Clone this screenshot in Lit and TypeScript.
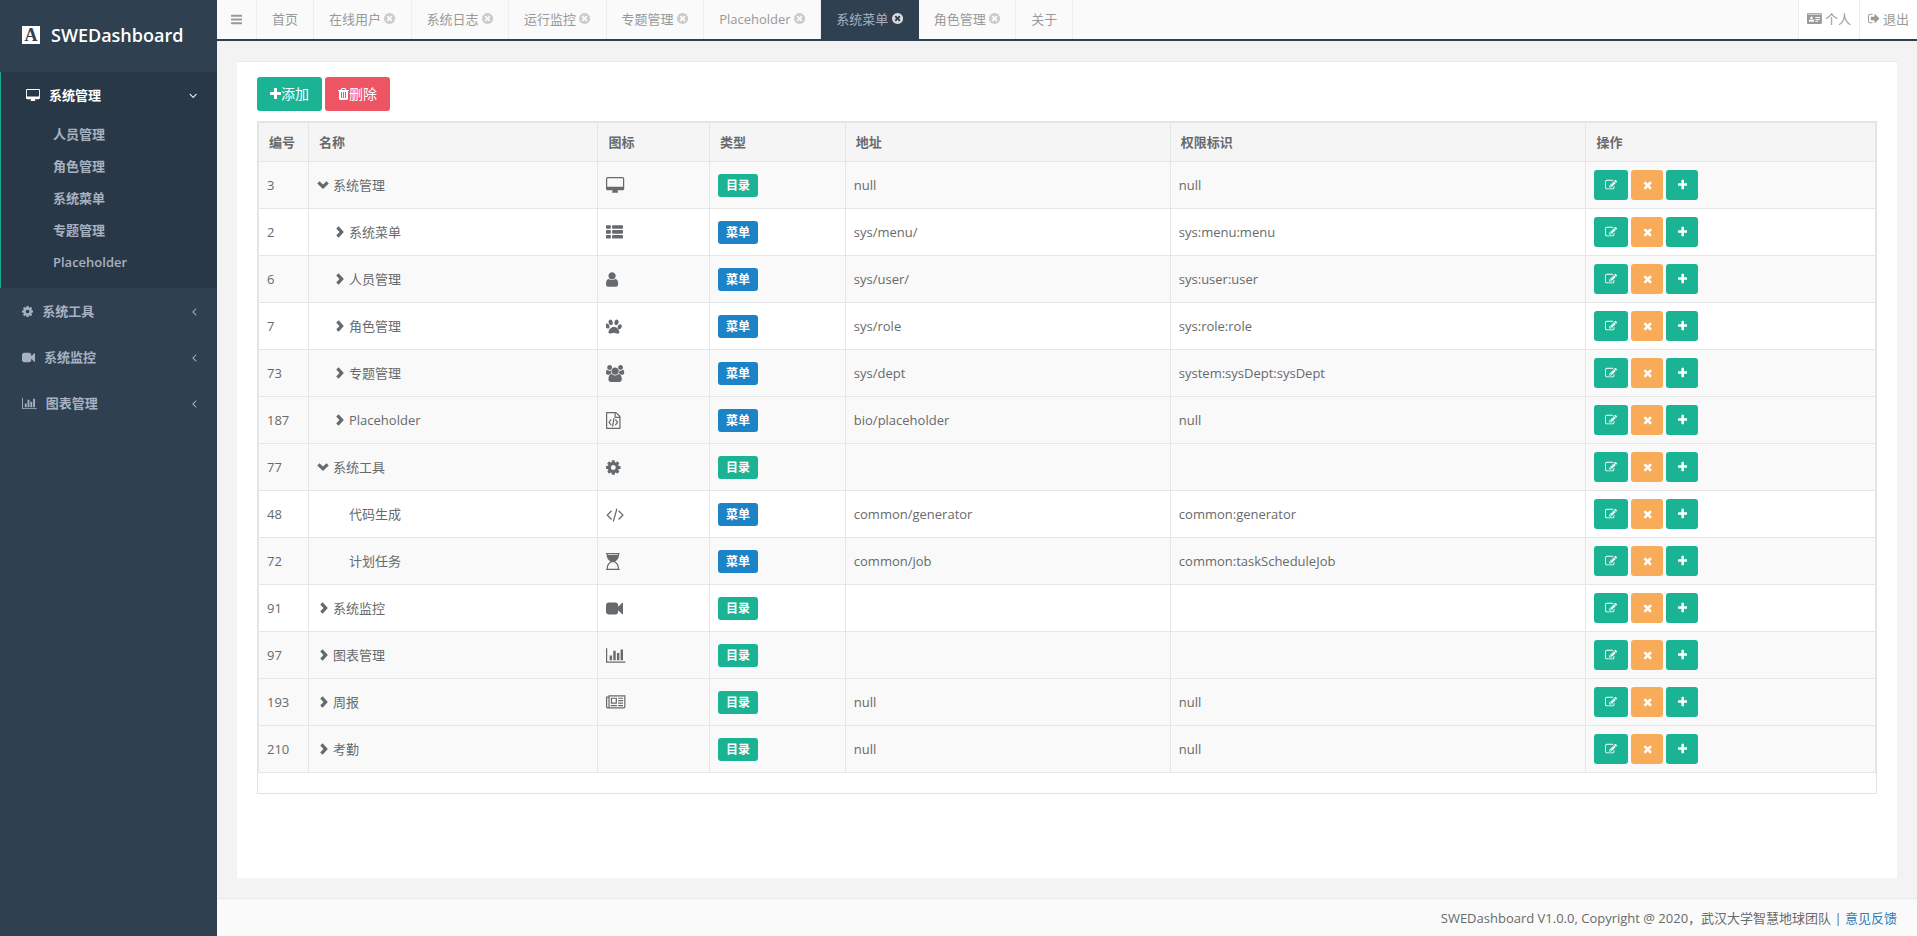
import { LitElement, html, svg, css, nothing } from "lit";
import { customElement, property } from "lit/decorators.js";

/* Icons on a 1792-unit em: [viewBox x, viewBox width, path] */
const ICONS: Record<string, [number, number, string]> = {
  bars: [128, 1536, "M1664 1344v128q0 26-19 45t-45 19h-1408q-26 0-45-19t-19-45v-128q0-26 19-45t45-19h1408q26 0 45 19t19 45zm0-512v128q0 26-19 45t-45 19h-1408q-26 0-45-19t-19-45v-128q0-26 19-45t45-19h1408q26 0 45 19t19 45zm0-512v128q0 26-19 45t-45 19h-1408q-26 0-45-19t-19-45v-128q0-26 19-45t45-19h1408q26 0 45 19t19 45z"],
  close: [128, 1536, "M1277 1122q0-26-19-45l-181-181 181-181q19-19 19-45 0-27-19-46l-90-90q-19-19-46-19-26 0-45 19l-181 181-181-181q-19-19-45-19-27 0-46 19l-90 90q-19 19-19 46 0 26 19 45l181 181-181 181q-19 19-19 45 0 27 19 46l90 90q19 19 46 19 26 0 45-19l181-181 181 181q19 19 45 19 27 0 46-19l90-90q19-19 19-46zm387-226q0 209-103 385.5t-279.5 279.5-385.5 103-385.5-103-279.5-279.5-103-385.5 103-385.5 279.5-279.5 385.5-103 385.5 103 279.5 279.5 103 385.5z"],
  plus: [192, 1408, "M1600 736v192q0 40-28 68t-68 28h-416v416q0 40-28 68t-68 28h-192q-40 0-68-28t-28-68v-416h-416q-40 0-68-28t-28-68v-192q0-40 28-68t68-28h416v-416q0-40 28-68t68-28h192q40 0 68 28t28 68v416h416q40 0 68 28t28 68z"],
  times: [192, 1408, "M1490 1322q0 40-28 68l-136 136q-28 28-68 28t-68-28l-294-294-294 294q-28 28-68 28t-68-28l-136-136q-28-28-28-68t28-68l294-294-294-294q-28-28-28-68t28-68l136-136q28-28 68-28t68 28l294 294 294-294q28-28 68-28t68 28l136 136q28 28 28 68t-28 68l-294 294 294 294q28 28 28 68z"],
  edit: [0, 1792, "M888 1184l116-116-152-152-116 116v56h96v96h56zm440-720q-16-16-33 1l-350 350q-17 17-1 33t33-1l350-350q17-17 1-33zm80 594v190q0 119-84.5 203.5t-203.5 84.5h-832q-119 0-203.5-84.5t-84.5-203.5v-832q0-119 84.5-203.5t203.5-84.5h832q63 0 117 25 15 7 18 23 3 17-9 29l-49 49q-14 14-32 8-23-6-45-6h-832q-66 0-113 47t-47 113v832q0 66 47 113t113 47h832q66 0 113-47t47-113v-126q0-13 9-22l64-64q15-15 35-7t20 29zm-96-738l288 288-672 672h-288v-288zm444 132l-92 92-288-288 92-92q28-28 68-28t68 28l152 152q28 28 28 68t-28 68z"],
  cog: [128, 1536, "M1152 896q0-106-75-181t-181-75-181 75-75 181 75 181 181 75 181-75 75-181zm512-109v222q0 12-8 23t-20 13l-185 28q-19 54-39 91 35 50 107 138 10 12 10 25t-9 23q-27 37-99 108t-94 71q-12 0-26-9l-138-108q-44 23-91 38-16 136-29 186-7 28-36 28h-222q-14 0-24.5-8.5t-11.5-21.5l-28-184q-49-16-90-37l-141 107q-10 9-25 9-14 0-25-11-126-114-165-168-7-10-7-23 0-12 8-23 15-21 51-66.5t54-70.5q-27-50-41-99l-183-27q-13-2-21-12.5t-8-23.5v-222q0-12 8-23t19-13l186-28q14-46 39-92-40-57-107-138-10-12-10-24 0-10 9-23 26-36 98.5-107.5t94.5-71.5q13 0 26 10l138 107q44-23 91-38 16-136 29-186 7-28 36-28h222q14 0 24.5 8.5t11.5 21.5l28 184q49 16 90 37l142-107q9-9 24-9 13 0 25 10 129 119 165 170 7 8 7 22 0 12-8 23-15 21-51 66.5t-54 70.5q26 50 41 98l183 28q13 2 21 12.5t8 23.5z"],
  video: [0, 1792, "M1792 352v1088q0 42-39 59-13 5-25 5-27 0-45-19l-403-403v166q0 119-84.5 203.5t-203.5 84.5h-704q-119 0-203.5-84.5t-84.5-203.5v-704q0-119 84.5-203.5t203.5-84.5h704q119 0 203.5 84.5t84.5 203.5v165l403-402q18-19 45-19 12 0 25 5 39 17 39 59z"],
  list: [0, 1792, "M512 1248v192q0 40-28 68t-68 28h-320q-40 0-68-28t-28-68v-192q0-40 28-68t68-28h320q40 0 68 28t28 68zM512 736v192q0 40-28 68t-68 28h-320q-40 0-68-28t-28-68v-192q0-40 28-68t68-28h320q40 0 68 28t28 68zM512 224v192q0 40-28 68t-68 28h-320q-40 0-68-28t-28-68v-192q0-40 28-68t68-28h320q40 0 68 28t28 68zM1792 1248v192q0 40-28 68t-68 28h-960q-40 0-68-28t-28-68v-192q0-40 28-68t68-28h960q40 0 68 28t28 68zM1792 736v192q0 40-28 68t-68 28h-960q-40 0-68-28t-28-68v-192q0-40 28-68t68-28h960q40 0 68 28t28 68zM1792 224v192q0 40-28 68t-68 28h-960q-40 0-68-28t-28-68v-192q0-40 28-68t68-28h960q40 0 68 28t28 68z"],
  user: [256, 1280, "M1536 1399q0 109-62.5 187t-150.5 78h-854q-88 0-150.5-78t-62.5-187q0-85 8.5-160.5t31.5-152 58.5-131 94-89 134.5-34.5q131 128 313 128t313-128q76 0 134.5 34.5t94 89 58.5 131 31.5 152 8.5 160.5zm-256-887q0 159-112.5 271.5t-271.5 112.5-271.5-112.5-112.5-271.5 112.5-271.5 271.5-112.5 271.5 112.5 112.5 271.5z"],
  chart: [0, 2048, "M640 896v512h-256v-512h256zm384-512v1024h-256v-1024h256zm1024 1152v128h-2048v-1536h128v1408h1920zm-640-896v768h-256v-768h256zm384-384v1152h-256v-1152h256z"],
  desktop: [0, 1920, "M1792 992v-832q0-13-9.5-22.5t-22.5-9.5h-1600q-13 0-22.5 9.5t-9.5 22.5v832q0 13 9.5 22.5t22.5 9.5h1600q13 0 22.5-9.5t9.5-22.5zm128-832v1088q0 66-47 113t-113 47h-544q0 37 16 77.5t32 71 16 43.5q0 26-19 45t-45 19h-512q-26 0-45-19t-19-45q0-14 16-44t32-70 16-78h-544q-66 0-113-47t-47-113v-1088q0-66 47-113t113-47h1600q66 0 113 47t47 113z"],
  users: [-64, 1920, "M529 896q-162 5-265 128h-134q-82 0-138-40.5t-56-118.5q0-353 124-353 6 0 43.5 21t97.5 42.5 119 21.5q67 0 133-23-5 37-5 66 0 139 81 256zm1071 637q0 120-73 189.5t-194 69.5h-874q-121 0-194-69.5t-73-189.5q0-53 3.5-103.5t14-109 26.5-108.5 43-97.5 62-81 85.5-53.5 111.5-20q10 0 43 21.5t73 48 107 48 135 21.5 135-21.5 107-48 73-48 43-21.5q61 0 111.5 20t85.5 53.5 62 81 43 97.5 26.5 108.5 14 109 3.5 103.5zm-1024-1277q0 106-75 181t-181 75-181-75-75-181 75-181 181-75 181 75 75 181zm704 384q0 159-112.5 271.5t-271.5 112.5-271.5-112.5-112.5-271.5 112.5-271.5 271.5-112.5 271.5 112.5 112.5 271.5zm576 225q0 78-56 118.5t-138 40.5h-134q-103-123-265-128 81-117 81-256 0-29-5-66 66 23 133 23 59 0 119-21.5t97.5-42.5 43.5-21q124 0 124 353zm-128-609q0 106-75 181t-181 75-181-75-75-181 75-181 181-75 181 75 75 181z"],
  paw: [64, 1664, "M780 508q0 60-19 113.5t-63 92.5-105 39q-76 0-138-57.5t-92-135.5-30-151q0-60 19-113.5t63-92.5 105-39q77 0 138.5 57.5t91.5 135 30 151.5zm-342 411q0 80-42 139t-119 59q-76 0-141.5-55.5t-100.5-133.5-35-152q0-80 42-139.5t119-59.5q76 0 141.5 55.5t100.5 134 35 152.5zm458-7q118 0 255 97.5t229 237 92 254.5q0 46-17 76.5t-48.5 45-64.5 20-76 5.5q-68 0-187.5-45t-182.5-45q-66 0-192.5 44.5t-200.5 44.5q-183 0-183-146 0-86 56-191.5t139.5-192.5 187.5-146 193-59zm239-159q-61 0-105-39t-63-92.5-19-113.5q0-74 30-151.5t91.5-135 138.5-57.5q61 0 105 39t63 92.5 19 113.5q0 73-30 151t-92 135.5-138 57.5zm432-104q77 0 119 59.5t42 139.5q0 74-35 152t-100.5 133.5-141.5 55.5q-77 0-119-59t-42-139q0-74 35-152.5t100.5-134 141.5-55.5z"],
  filecode: [128, 1536, "M1596 380q28 28 48 76t20 88v1152q0 40-28 68t-68 28h-1344q-40 0-68-28t-28-68v-1600q0-40 28-68t68-28h896q40 0 88 20t76 48zm-444-244v376h376q-10-29-22-41l-313-313q-12-12-41-22zm384 1528v-1024h-416q-40 0-68-28t-28-68v-416h-768v1536h1280zM608 768q8-11 21-12.5t24 6.5l51 38q11 8 12.5 21t-6.5 24l-182 243 182 243q8 11 6.5 24t-12.5 21l-51 38q-11 8-24 6.5t-21-12.5l-226-301q-14-19 0-38zM1410 1069q14 19 0 38l-226 301q-8 11-21 12.5t-24-6.5l-51-38q-11-8-12.5-21t6.5-24l182-243-182-243q-8-11-6.5-24t12.5-21l51-38q11-8 24-6.5t21 12.5zM792 1534q-13-2-20.5-13t-5.5-24l138-831q2-13 13-20.5t24-5.5l63 10q13 2 20.5 13t5.5 24l-138 831q-2 13-13 20.5t-24 5.5z"],
  code: [64, 1920, "M681 1399l-50 50q-10 10-23 10t-23-10l-466-466q-10-10-10-23t10-23l466-466q10-10 23-10t23 10l50 50q10 10 10 23t-10 23l-393 393 393 393q10 10 10 23t-10 23zm591-1067l-373 1291q-4 13-15.5 19.5t-23.5 2.5l-62-17q-13-4-19.5-15.5t-2.5-24.5l373-1291q4-13 15.5-19.5t23.5-2.5l62 17q13 4 19.5 15.5t2.5 24.5zm657 651l-466 466q-10 10-23 10t-23-10l-50-50q-10-10-10-23t10-23l393-393-393-393q-10-10-10-23t10-23l50-50q10-10 23-10t23 10l466 466q10 10 10 23t-10 23z"],
  hourglass: [128, 1536, "M160 0h1376q32 0 32 32v64q0 32-32 32h-1376q-32 0-32-32v-64q0-32 32-32zM192 128h128v90h1056v-90h128q0 290-110 480t-290 288q180 98 290 288t110 480h-128q0-260-110-430t-262-260h-312q-152 90-262 260t-110 430h-128q0-290 110-480t290-288q-180-98-290-288t-110-480zM160 1664h1376q32 0 32 32v64q0 32-32 32h-1376q-32 0-32-32v-64q0-32 32-32z"],
  news: [0, 2048, "M1024 512h-384v384h384v-384zm128 640v128h-640v-128h640zm0-768v640h-640v-640h640zm640 768v128h-512v-128h512zm0-256v128h-512v-128h512zm0-256v128h-512v-128h512zm0-256v128h-512v-128h512zm-1536 960v-960h-128v960q0 26 19 45t45 19 45-19 19-45zm1664 0v-1088h-1536v1088q0 33-11 64h1483q26 0 45-19t19-45zm128-1216v1216q0 80-56 136t-136 56h-1664q-80 0-136-56t-56-136v-1088h256v-128h1792z"],
  trash: [192, 1408, "M704 1376v-704q0-14-9-23t-23-9h-64q-14 0-23 9t-9 23v704q0 14 9 23t23 9h64q14 0 23-9t9-23zm256 0v-704q0-14-9-23t-23-9h-64q-14 0-23 9t-9 23v704q0 14 9 23t23 9h64q14 0 23-9t9-23zm256 0v-704q0-14-9-23t-23-9h-64q-14 0-23 9t-9 23v704q0 14 9 23t23 9h64q14 0 23-9t9-23zm-544-992h448l-48-117q-7-9-17-11h-317q-10 2-17 11zm928 32v64q0 14-9 23t-23 9h-96v948q0 83-47 143.5t-113 60.5h-832q-66 0-113-58.5t-47-141.5v-952h-96q-14 0-23-9t-9-23v-64q0-14 9-23t23-9h309l70-167q15-37 54-63t79-26h320q40 0 79 26t54 63l70 167h309q14 0 23 9t9 23z"],
  left: [576, 640, "M1203 544q0 13-10 23l-393 393 393 393q10 10 10 23t-10 23l-50 50q-10 10-23 10t-23-10l-466-466q-10-10-10-23t10-23l466-466q10-10 23-10t23 10l50 50q10 10 10 23z"],
  down: [320, 1152, "M1395 736q0 13-10 23l-466 466q-10 10-23 10t-23-10l-466-466q-10-10-10-23t10-23l50-50q10-10 23-10t23 10l393 393 393-393q10-10 23-10t23 10l50 50q10 10 10 23z"],
  signout: [64, 1664, "M704 1440q0 4 1 20t.5 26.5-3 23.5-10 19.5-20.5 6.5h-320q-119 0-203.5-84.5t-84.5-203.5v-704q0-119 84.5-203.5t203.5-84.5h320q13 0 22.5 9.5t9.5 22.5q0 4 1 20t.5 26.5-3 23.5-10 19.5-20.5 6.5h-320q-66 0-113 47t-47 113v704q0 66 47 113t113 47h312l11.5 1 11.5 3 8 5.5 7 9 2 13.5zm928-544q0 26-19 45l-544 544q-19 19-45 19t-45-19-19-45v-288h-448q-26 0-45-19t-19-45v-384q0-26 19-45t45-19h448v-288q0-26 19-45t45-19 45 19l544 544q19 19 19 45z"],
  card: [0, 2048, "M160 128h1728q160 0 160 160v1216q0 160-160 160h-1728q-160 0-160-160v-1216q0-160 160-160zM128 256v96h1792v-96zM620 620a190 190 0 1 0 1 0zM400 1000q-144 60-144 300v44h730v-44q0-240-144-300-110 70-221 70t-221-70zM1152 704v128h640v-128zM1152 960v128h640v-128zM1152 1216v128h400v-128z"],
  openNode: [0, 1792, "M370 330l526 500 526-500 330 330-856 820-856-820z"],
  closedNode: [0, 1792, "M840 40l-360 330 480 525-480 525 360 330 780-855z"],
};

@customElement("ui-icon")
export class UiIcon extends LitElement {
  static styles = css`
    :host { display: inline-flex; flex: none; }
    .glyph { display: block; height: 1em; fill: currentColor; }
  `;
  @property() name = "plus";
  render() {
    const [x, w, d] = ICONS[this.name];
    return html`<svg class="glyph" viewBox="${x} 0 ${w} 1792" aria-hidden="true">${svg`<path fill-rule="evenodd" d=${d}></path>`}</svg>`;
  }
}

interface Row {
  id: number; name: string; level: number; node: "open" | "closed" | "leaf";
  icon: string; type: "目录" | "菜单"; url: string; perm: string; shaded: boolean;
}
const row = (id: number, name: string, level: number, node: Row["node"], icon: string,
  type: Row["type"], url: string, perm: string, shaded: boolean): Row =>
  ({ id, name, level, node, icon, type, url, perm, shaded });

const ROWS: Row[] = [
  row(3, "系统管理", 0, "open", "desktop", "目录", "null", "null", true),
  row(2, "系统菜单", 1, "closed", "list", "菜单", "sys/menu/", "sys:menu:menu", false),
  row(6, "人员管理", 1, "closed", "user", "菜单", "sys/user/", "sys:user:user", true),
  row(7, "角色管理", 1, "closed", "paw", "菜单", "sys/role", "sys:role:role", false),
  row(73, "专题管理", 1, "closed", "users", "菜单", "sys/dept", "system:sysDept:sysDept", true),
  row(187, "Placeholder", 1, "closed", "filecode", "菜单", "bio/placeholder", "null", true),
  row(77, "系统工具", 0, "open", "cog", "目录", "", "", true),
  row(48, "代码生成", 1, "leaf", "code", "菜单", "common/generator", "common:generator", false),
  row(72, "计划任务", 1, "leaf", "hourglass", "菜单", "common/job", "common:taskScheduleJob", true),
  row(91, "系统监控", 0, "closed", "video", "目录", "", "", false),
  row(97, "图表管理", 0, "closed", "chart", "目录", "", "", true),
  row(193, "周报", 0, "closed", "news", "目录", "null", "null", true),
  row(210, "考勤", 0, "closed", "", "目录", "null", "null", true),
];

const TABS = [
  { label: "首页", closable: false },
  { label: "在线用户", closable: true },
  { label: "系统日志", closable: true },
  { label: "运行监控", closable: true },
  { label: "专题管理", closable: true },
  { label: "Placeholder", closable: true },
  { label: "系统菜单", closable: true },
  { label: "角色管理", closable: true },
  { label: "关于", closable: false },
];

@customElement("app-root")
export class AppRoot extends LitElement {
  static styles = css`
    :host {
      display: flex; min-height: 100vh; background: #f3f3f4; color: #676a6c;
      font: 13px/18px "Open Sans", "Noto Sans CJK SC", sans-serif;
    }
    * { box-sizing: border-box; }
    button { font: inherit; color: inherit; border: 0; background: none; margin: 0; padding: 0; cursor: pointer; }
    a { color: inherit; text-decoration: none; }

    .sidebar { flex: none; width: 217px; background: #2f4050; color: #a7b1c2; font-weight: 600; }
    .brand { display: flex; align-items: center; gap: 11px; height: 72px; padding: 0 22px 2px; color: #fff; font-size: 18px; }
    .mark {
      width: 18px; height: 18px; background: #fff; color: #2f4050; text-align: center;
      font: bold 18px/18px "Liberation Serif", serif;
    }
    .group.active { background: #293846; border-left: 1px solid #19aa8d; padding-bottom: 10px; }
    .item { display: flex; align-items: center; gap: 9px; width: 100%; padding: 14px 20px 14px 22px; text-align: left; }
    .item .arrow { margin-left: auto; }
    .active .item { color: #fff; padding-left: 25px; }
    .sub { display: block; padding: 7px 20px 7px 52px; }

    .main { flex: 1; min-width: 0; display: flex; flex-direction: column; }
    .topbar { display: flex; height: 41px; background: #fafafa; border-bottom: 2px solid #2f4050; color: #999; }
    .toggle { width: 40px; display: flex; align-items: center; justify-content: center; border-right: 1px solid #eee; }
    .tab { display: flex; align-items: center; padding: 0 15px 2px; border-right: 1px solid #eee; }
    .tab a { white-space: pre; }
    .tab button { display: flex; color: #ccc; }
    .tab.current { background: #2f4050; color: #a7b1c2; border-color: #2f4050; }
    .tab.current button { color: #d8d8d8; }
    .tools { margin-left: auto; display: flex; background: #fff; }
    .tools a { display: flex; align-items: center; gap: 3px; padding: 0 8px 2px; border-left: 1px solid #eee; }

    .panel { flex: 1; margin: 20px; padding: 15px 20px; background: #fff; border-top: 1px solid #e7eaec; }
    .toolbar { display: flex; gap: 3px; margin-bottom: 10px; font-size: 14px; line-height: 20px; color: #fff; }
    .btn { display: flex; align-items: center; border-radius: 3px; padding: 7px 13px; }
    .green { background: #1ab394; }
    .red { background: #ed5565; }
    .orange { background: #f8ac59; }
    .grid { border: 1px solid #e1e4e6; padding-bottom: 20px; }
    table { width: 100%; table-layout: fixed; border-collapse: collapse; border: 1px solid #e7e7e7; }
    th, td { border: 1px solid #e4e6e7; padding: 0 8px; text-align: left; overflow-wrap: anywhere; }
    th { height: 39px; padding: 0 10px; background: #f5f5f6; font-weight: 600; }
    td { height: 47px; }
    tr.shaded { background: #f9f9f9; }
    .c-id { width: 50px; }
    .c-name { width: 17.9%; }
    .c-icon { width: 6.9%; }
    .c-type { width: 8.4%; }
    .c-url { width: 20.1%; }
    .c-perm { width: 25.7%; }
    .node { display: flex; align-items: center; }
    .nested { padding-left: 16px; }
    .expander { width: 16px; height: 18px; display: flex; align-items: center; font-size: 12px; }
    .pic { display: flex; font-size: 17px; }
    .badge {
      display: inline-block; padding: 3px 8px; border-radius: 3px; color: #fff;
      font-size: 12px; line-height: 17px; font-weight: 700;
    }
    .blue { background: #1c84c6; }
    .ops { display: flex; gap: 3px; color: #fff; font-size: 12px; }
    .ops .btn { height: 30px; min-width: 32px; justify-content: center; padding: 0 11px; }

    .footer {
      height: 38px; padding: 0 20px; display: flex; align-items: center; justify-content: flex-end;
      background: #fafafa; border-top: 1px solid #e7eaec;
      white-space: pre;
    }
    .footer a { color: #337ab7; }
  `;

  private group(icon: string, label: string) {
    return html`<div class="group">
      <button class="item"><ui-icon name=${icon}></ui-icon><span>${label}</span><ui-icon class="arrow" name="left"></ui-icon></button>
    </div>`;
  }

  private renderRow(r: Row) {
    return html`<tr class=${r.shaded ? "shaded" : ""}>
      <td>${r.id}</td>
      <td><div class="node ${r.level ? "nested" : ""}">
        ${r.node === "leaf"
          ? html`<span class="expander"></span>`
          : html`<button class="expander" aria-label="${r.name}" aria-expanded=${r.node === "open"}><ui-icon name=${r.node === "open" ? "openNode" : "closedNode"}></ui-icon></button>`}
        <span>${r.name}</span></div></td>
      <td>${r.icon ? html`<span class="pic"><ui-icon name=${r.icon}></ui-icon></span>` : nothing}</td>
      <td><span class="badge ${r.type === "目录" ? "green" : "blue"}">${r.type}</span></td>
      <td>${r.url}</td>
      <td>${r.perm}</td>
      <td><div class="ops">
        <button class="btn green" aria-label="编辑"><ui-icon name="edit"></ui-icon></button>
        <button class="btn orange" aria-label="删除"><ui-icon name="times"></ui-icon></button>
        <button class="btn green" aria-label="添加"><ui-icon name="plus"></ui-icon></button>
      </div></td>
    </tr>`;
  }

  render() {
    return html`
      <nav class="sidebar">
        <div class="brand"><span class="mark">A</span><span>SWEDashboard</span></div>
        <div class="group active">
          <button class="item"><ui-icon name="desktop"></ui-icon><span>系统管理</span><ui-icon class="arrow" name="down"></ui-icon></button>
          ${["人员管理", "角色管理", "系统菜单", "专题管理", "Placeholder"].map((s) => html`<a class="sub" href="#">${s}</a>`)}
        </div>
        ${this.group("cog", "系统工具")}
        ${this.group("video", "系统监控")}
        ${this.group("chart", "图表管理")}
      </nav>
      <div class="main">
        <header class="topbar">
          <button class="toggle" aria-label="菜单"><ui-icon name="bars"></ui-icon></button>
          ${TABS.map((t) => html`<div class="tab ${t.label === "系统菜单" ? "current" : ""}">
            <a href="#">${t.closable ? t.label + " " : t.label}</a>
            ${t.closable ? html`<button aria-label="关闭"><ui-icon name="close"></ui-icon></button>` : nothing}
          </div>`)}
          <div class="tools">
            <a href="#"><ui-icon name="card"></ui-icon><span>个人</span></a>
            <a href="#"><ui-icon name="signout"></ui-icon><span>退出</span></a>
          </div>
        </header>
        <main class="panel">
          <div class="toolbar">
            <button class="btn green"><ui-icon name="plus"></ui-icon>添加</button>
            <button class="btn red"><ui-icon name="trash"></ui-icon>删除</button>
          </div>
          <div class="grid">
            <table>
              <thead><tr>
                <th class="c-id">编号</th><th class="c-name">名称</th><th class="c-icon">图标</th><th class="c-type">类型</th>
                <th class="c-url">地址</th><th class="c-perm">权限标识</th><th>操作</th>
              </tr></thead>
              <tbody>${ROWS.map((r) => this.renderRow(r))}</tbody>
            </table>
          </div>
        </main>
        <footer class="footer"><span>SWEDashboard V1.0.0, Copyright @ 2020，武汉大学智慧地球团队 | </span><a href="#">意见反馈</a></footer>
      </div>
    `;
  }
}
